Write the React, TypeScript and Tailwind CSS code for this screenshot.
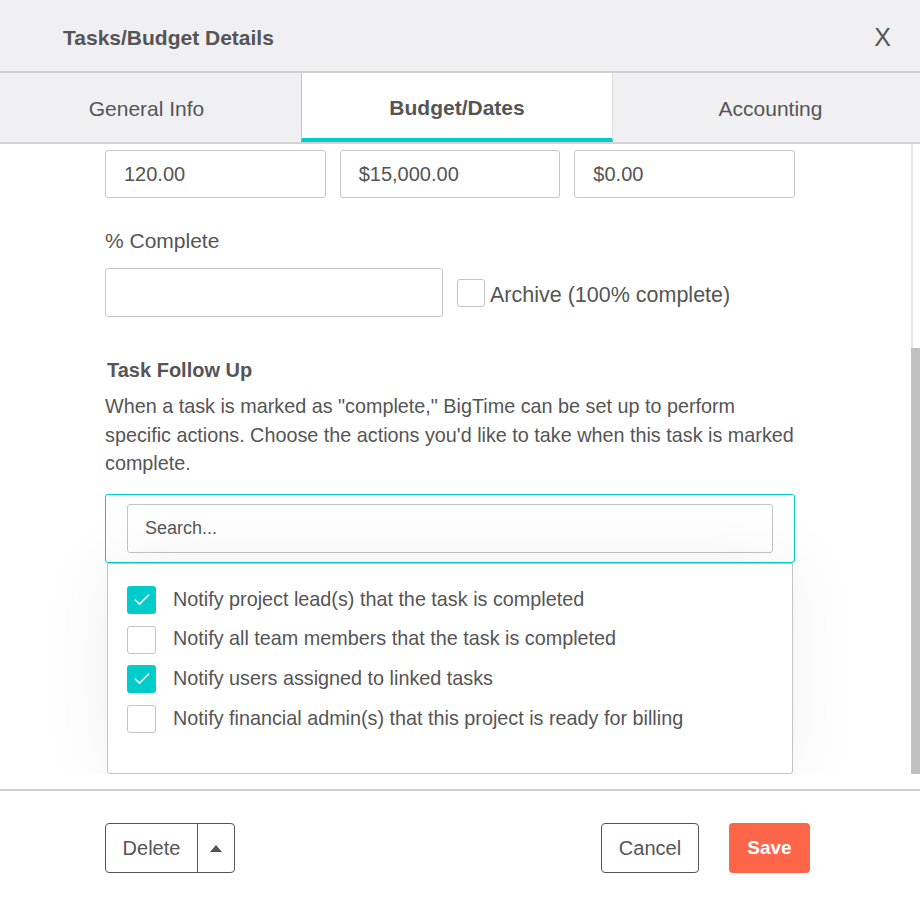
import { Check } from "lucide-react";

const font = { fontFamily: '"Liberation Sans", Arial, sans-serif' };

function Box({ checked }: { checked: boolean }) {
  return checked ? (
    <span className="flex h-[28px] w-[29px] shrink-0 items-center justify-center rounded-[3px] bg-[#00cccc]">
      <Check className="size-[20px] text-white" strokeWidth={1.9} />
    </span>
  ) : (
    <span className="h-[28px] w-[29px] shrink-0 rounded-[3px] border border-[#c4c4c4] bg-white" />
  );
}

const options = [
  { label: "Notify project lead(s) that the task is completed", checked: true },
  { label: "Notify all team members that the task is completed", checked: false },
  { label: "Notify users assigned to linked tasks", checked: true },
  { label: "Notify financial admin(s) that this project is ready for billing", checked: false },
];

export default function App() {
  return (
    <div className="flex h-[899px] w-[920px] flex-col overflow-hidden bg-white text-[#555]" style={font}>
      <div className="flex h-[73px] shrink-0 items-center justify-between border-b-2 border-[#cfcfcf] bg-[#f0f0f2] pl-[63px] pr-[29px] pt-[4px]">
        <h1 className="text-[21px] font-bold text-[#555]">Tasks/Budget Details</h1>
        <button className="pt-[1px] text-[25px] font-light text-[#555]" type="button">
          X
        </button>
      </div>

      <div className="flex h-[71px] shrink-0 border-b-2 border-[#d4d4d4] bg-[#f0f0f2] text-[21px]">
        <div className="flex w-[301px] items-center justify-center pr-[8px] pt-[2px]">General Info</div>
        <div className="flex w-[312px] items-center justify-center border-x border-l-[#c4c4c4] border-r-[#dcdcdc] border-b-4 border-b-[#00cccc] bg-white pt-[5px] font-bold">
          Budget/Dates
        </div>
        <div className="flex flex-1 items-center justify-center pl-[8px] pt-[2px]">Accounting</div>
      </div>

      <div className="flex h-[630px] shrink-0 overflow-hidden">
        <div className="flex-1 overflow-hidden pl-[105px] pr-[116px] pt-[6px]">
          <div className="grid grid-cols-3 gap-[14px] text-[20px]">
            {["120.00", "$15,000.00", "$0.00"].map((v) => (
              <div key={v} className="flex h-[48px] items-center rounded-[3px] border border-[#c8c8c8] px-[18px]">
                {v}
              </div>
            ))}
          </div>

          <div className="mt-[31px] text-[21px] leading-[24px]">% Complete</div>
          <div className="mt-[15px] flex items-center gap-[14px]">
            <div className="h-[49px] w-[338px] rounded-[3px] border border-[#c8c8c8]" />
            <label className="flex items-center gap-[5px] text-[21.5px]">
              <span className="h-[28px] w-[28px] rounded-[3px] border border-[#c4c4c4]" />
              <span className="pt-[6px]">Archive (100% complete)</span>
            </label>
          </div>

          <h2 className="mt-[41px] pl-[2px] text-[20px] font-bold leading-[24px]">Task Follow Up</h2>
          <p className="mt-[10px] whitespace-nowrap text-[19.8px] leading-[28.5px]">
            When a task is marked as "complete," BigTime can be set up to perform
            <br />
            specific actions. Choose the actions you'd like to take when this task is marked
            <br />
            complete.
          </p>

          <div className="mt-[16px] rounded-[3px] border border-[#00cccc] px-[21px] py-[9px]">
            <div className="flex h-[49px] items-center rounded-[3px] border border-[#c4c4c4] px-[17px] text-[18px] text-[#555]">
              Search...
            </div>
          </div>
          <div className="mx-[2px] flex h-[211px] flex-col gap-[11px] rounded-b-[3px] border border-[#c4c4c4] bg-white px-[19px] pt-[22px] shadow-[0_0_70px_rgba(0,0,0,0.07)]">
            {options.map((o) => (
              <div key={o.label} className="flex items-center gap-[17px] text-[19.8px]">
                <Box checked={o.checked} />
                <span className="-mt-[1px]">{o.label}</span>
              </div>
            ))}
          </div>
        </div>
        <div className="relative w-[9px] shrink-0">
          <div className="absolute left-0 top-0 h-full w-[2px] bg-[#e6e6e6]" />
          <div className="absolute bottom-0 left-0 h-[426px] w-[9px] bg-[#c1c1c1]" />
        </div>
      </div>

      <div className="mt-[15px] flex flex-1 items-start justify-between border-t-2 border-[#cfcfcf] pl-[105px] pr-[110px] pt-[32px]">
        <div className="flex h-[50px] rounded-[4px] border border-[#555] text-[20px]">
          <button className="flex w-[92px] items-center justify-center border-r border-[#555]" type="button">
            Delete
          </button>
          <button className="flex w-[36px] items-center justify-center" type="button">
            <svg width="12" height="7" viewBox="0 0 12 7">
              <polygon points="0,7 6,0 12,7" fill="#555" />
            </svg>
          </button>
        </div>
        <div className="flex gap-[30px]">
          <button className="h-[50px] w-[98px] rounded-[4px] border border-[#555] text-[20px]" type="button">
            Cancel
          </button>
          <button className="h-[50px] w-[81px] rounded-[4px] bg-[#ff6549] text-[19px] font-bold text-white" type="button">
            Save
          </button>
        </div>
      </div>
    </div>
  );
}
